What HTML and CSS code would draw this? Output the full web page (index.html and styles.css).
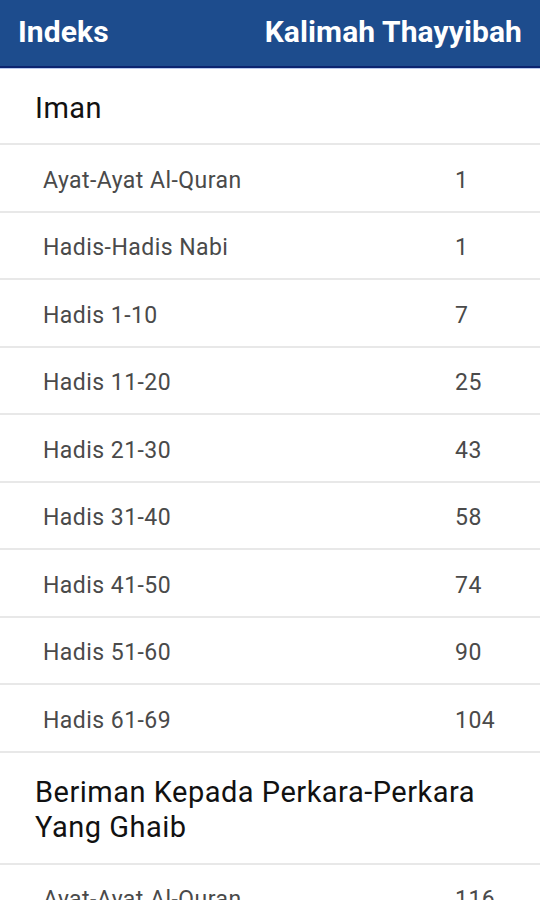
FILE: index.html
```html
<!DOCTYPE html>
<html>
<head>
<meta charset="utf-8">
<link rel="stylesheet" href="styles.css">
</head>
<body>
<header class="bar">
  <span class="bar-title">Indeks</span>
  <span class="bar-title">Kalimah Thayyibah</span>
</header>
<main class="list">
  <div class="section">Iman</div>
  <div class="row"><span class="label">Ayat-Ayat Al-Quran</span><span class="num">1</span></div>
  <div class="row"><span class="label">Hadis-Hadis Nabi</span><span class="num">1</span></div>
  <div class="row"><span class="label">Hadis 1-10</span><span class="num">7</span></div>
  <div class="row"><span class="label">Hadis 11-20</span><span class="num">25</span></div>
  <div class="row"><span class="label">Hadis 21-30</span><span class="num">43</span></div>
  <div class="row"><span class="label">Hadis 31-40</span><span class="num">58</span></div>
  <div class="row"><span class="label">Hadis 41-50</span><span class="num">74</span></div>
  <div class="row"><span class="label">Hadis 51-60</span><span class="num">90</span></div>
  <div class="row"><span class="label">Hadis 61-69</span><span class="num">104</span></div>
  <div class="section section-wrap">Beriman Kepada Perkara-Perkara Yang Ghaib</div>
  <div class="row"><span class="label">Ayat-Ayat Al-Quran</span><span class="num">116</span></div>
</main>
</body>
</html>
```
FILE: styles.css
```css
html, body {
  margin: 0;
  padding: 0;
  background: #ffffff;
  font-family: Roboto, "Noto Sans", sans-serif;
}
body {
  width: 540px;
  height: 900px;
  overflow: hidden;
}
.bar {
  height: 66px;
  background: #1d4c8d;
  border-bottom: 2px solid #0b2470;
  box-shadow: 0 1px 0 #b9c9ee;
  display: flex;
  align-items: center;
  justify-content: space-between;
  padding: 0 18px;
}
.bar-title {
  color: #ffffff;
  font-weight: 700;
  font-size: 30px;
  letter-spacing: 0.1px;
  line-height: 1;
  padding-bottom: 2px;
}
.list {
  display: flex;
  flex-direction: column;
}
.section {
  height: 77px;
  box-sizing: border-box;
  display: flex;
  align-items: center;
  padding: 5px 35px 0;
  font-size: 29px;
  letter-spacing: 0.5px;
  color: #111111;
  border-bottom: 2px solid #e8e8e8;
}
.section-wrap {
  height: 112px;
  line-height: 35px;
  padding-right: 40px;
}
.row {
  height: 67.5px;
  box-sizing: border-box;
  display: flex;
  align-items: center;
  padding-left: 43px;
  padding-top: 5px;
  border-bottom: 2px solid #e8e8e8;
  color: #4a4a4a;
  font-size: 23px;
  letter-spacing: 0.45px;
}
.label {
  width: 412px;
}
.num {
  flex: 1;
}
```
